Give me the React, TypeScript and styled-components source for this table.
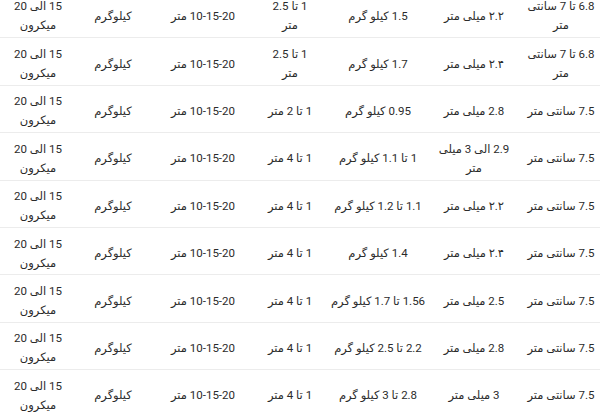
import React from 'react';
import styled, { createGlobalStyle } from 'styled-components';

const GlobalStyle = createGlobalStyle`
  html, body {
    margin: 0;
    padding: 0;
    background: #ffffff;
  }
  body {
    overflow: hidden;
  }
`;

const Page = styled.div`
  width: 600px;
  height: 414px;
  overflow: hidden;
  background: #ffffff;
`;

const Table = styled.table`
  direction: rtl;
  width: 606px;
  margin-top: -9.5px;
  border-collapse: collapse;
  table-layout: fixed;
  font-family: Roboto, "DejaVu Sans", sans-serif;
  font-size: 11.5px;
  color: #2b2b2b;
`;

const Row = styled.tr`
  height: 47.4px;
  border-bottom: 1.5px solid #ececec;
`;

const Cell = styled.td`
  text-align: center;
  vertical-align: middle;
  padding: 5px 0 0;
  line-height: 19px;
  white-space: nowrap;
`;

// column widths, right to left
const widths = [90, 84, 108, 68, 106, 74, 76];

// "|" marks where the line wraps in the reference
const rows: string[][] = [
  ['6.8 تا 7 سانتی|متر', '۲.۲ میلی متر', '1.5 کیلو گرم', '1 تا 2.5|متر', '10-15-20 متر', 'کیلوگرم', '15 الی 20|میکرون'],
  ['6.8 تا 7 سانتی|متر', '۲.۴ میلی متر', '1.7 کیلو گرم', '1 تا 2.5|متر', '10-15-20 متر', 'کیلوگرم', '15 الی 20|میکرون'],
  ['7.5 سانتی متر', '2.8 میلی متر', '0.95 کیلو گرم', '1 تا 2 متر', '10-15-20 متر', 'کیلوگرم', '15 الی 20|میکرون'],
  ['7.5 سانتی متر', '2.9 الی 3 میلی|متر', '1 تا 1.1 کیلو گرم', '1 تا 4 متر', '10-15-20 متر', 'کیلوگرم', '15 الی 20|میکرون'],
  ['7.5 سانتی متر', '۲.۲ میلی متر', '1.1 تا 1.2 کیلو گرم', '1 تا 4 متر', '10-15-20 متر', 'کیلوگرم', '15 الی 20|میکرون'],
  ['7.5 سانتی متر', '۲.۴ میلی متر', '1.4 کیلو گرم', '1 تا 4 متر', '10-15-20 متر', 'کیلوگرم', '15 الی 20|میکرون'],
  ['7.5 سانتی متر', '2.5 میلی متر', '1.56 تا 1.7 کیلو گرم', '1 تا 4 متر', '10-15-20 متر', 'کیلوگرم', '15 الی 20|میکرون'],
  ['7.5 سانتی متر', '2.8 میلی متر', '2.2 تا 2.5 کیلو گرم', '1 تا 4 متر', '10-15-20 متر', 'کیلوگرم', '15 الی 20|میکرون'],
  ['7.5 سانتی متر', '3 میلی متر', '2.8 تا 3 کیلو گرم', '1 تا 4 متر', '10-15-20 متر', 'کیلوگرم', '15 الی 20|میکرون'],
];

const CellText: React.FC<{ text: string }> = ({ text }) => (
  <>
    {text.split('|').map((line, i) => (
      <React.Fragment key={i}>
        {i > 0 && <br />}
        {line}
      </React.Fragment>
    ))}
  </>
);

const App: React.FC = () => {
  return (
    <Page>
      <GlobalStyle />
      <Table>
        <colgroup>
          {widths.map((w, i) => (
            <col key={i} style={{ width: w }} />
          ))}
        </colgroup>
        <tbody>
          {rows.map((row, r) => (
            <Row key={r}>
              {row.map((cell, c) => (
                <Cell key={c}>
                  <CellText text={cell} />
                </Cell>
              ))}
            </Row>
          ))}
        </tbody>
      </Table>
    </Page>
  );
};

export default App;
